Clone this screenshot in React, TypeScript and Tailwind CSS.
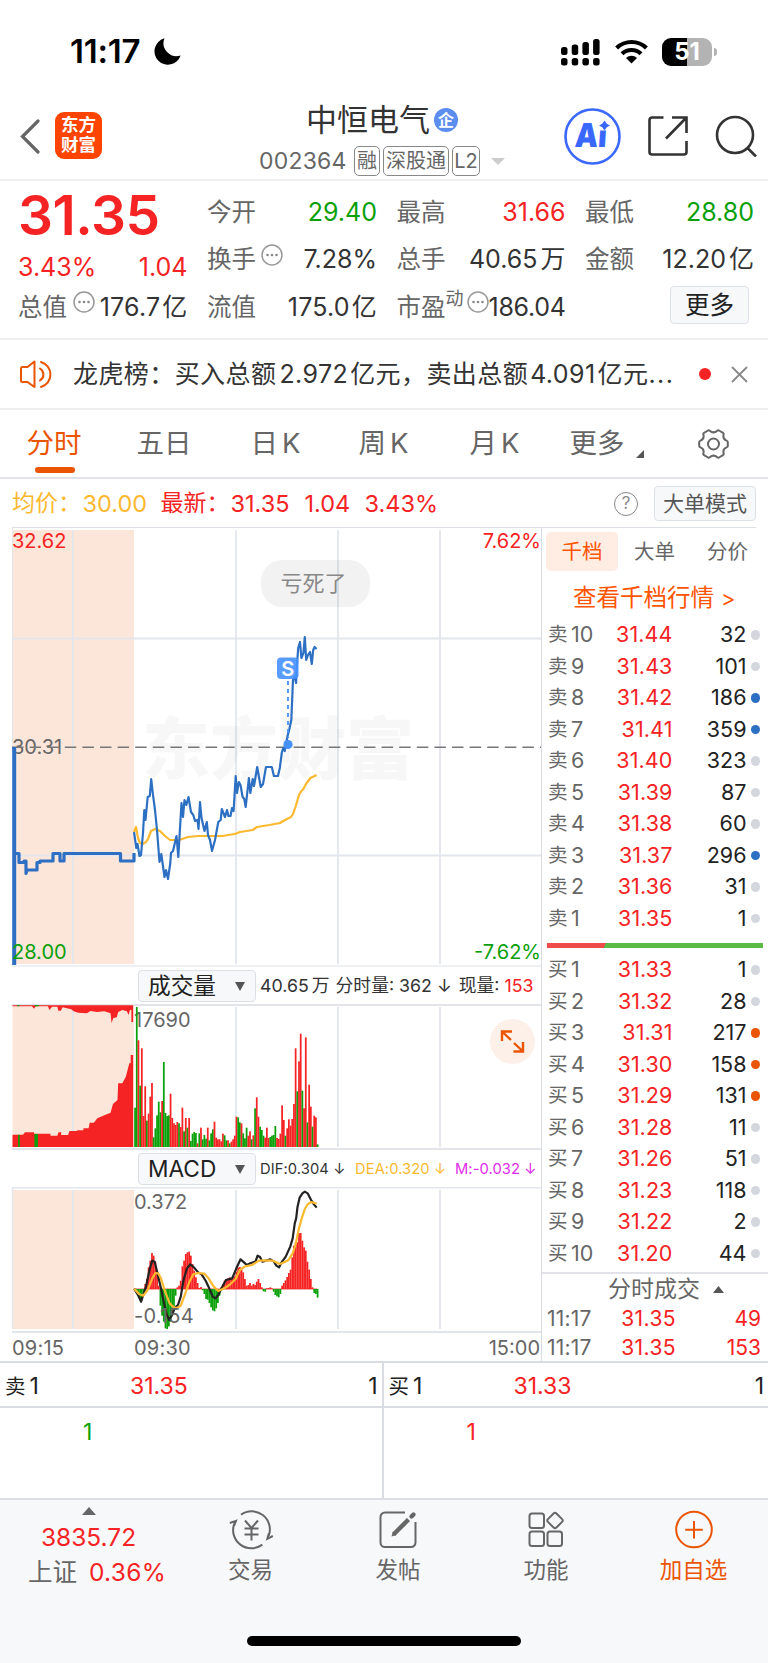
import React from "react";

type Point = [number, number];

interface DepthRow {
  label: string;
  level: number;
  price: string;
  qty: number;
  dot?: string;
}

const RED = "#f52323";
const GREEN = "#0aa00a";

const sells: DepthRow[] = [
  { label: "卖", level: 10, price: "31.44", qty: 32 },
  { label: "卖", level: 9, price: "31.43", qty: 101 },
  { label: "卖", level: 8, price: "31.42", qty: 186, dot: "bg-[#2d70c3]" },
  { label: "卖", level: 7, price: "31.41", qty: 359, dot: "bg-[#2d70c3]" },
  { label: "卖", level: 6, price: "31.40", qty: 323 },
  { label: "卖", level: 5, price: "31.39", qty: 87 },
  { label: "卖", level: 4, price: "31.38", qty: 60 },
  { label: "卖", level: 3, price: "31.37", qty: 296, dot: "bg-[#2d70c3]" },
  { label: "卖", level: 2, price: "31.36", qty: 31 },
  { label: "卖", level: 1, price: "31.35", qty: 1 },
];

const buys: DepthRow[] = [
  { label: "买", level: 1, price: "31.33", qty: 1 },
  { label: "买", level: 2, price: "31.32", qty: 28 },
  { label: "买", level: 3, price: "31.31", qty: 217, dot: "bg-[#ea5504]" },
  { label: "买", level: 4, price: "31.30", qty: 158, dot: "bg-[#ea5504]" },
  { label: "买", level: 5, price: "31.29", qty: 131, dot: "bg-[#ea5504]" },
  { label: "买", level: 6, price: "31.28", qty: 11 },
  { label: "买", level: 7, price: "31.26", qty: 51 },
  { label: "买", level: 8, price: "31.23", qty: 118 },
  { label: "买", level: 9, price: "31.22", qty: 2 },
  { label: "买", level: 10, price: "31.20", qty: 44 },
];

const priceLine =
  "134,832 136.3,848 137.5,844 139.5,856 141,855 143,833 144.3,810 145.5,820 147.7,797 149.8,796 151.2,779 153,795 155,810 157,830 159.5,862 161.3,854 164.5,877 166,870 168,879 170.3,863 171,853 173,851 176.5,836 178.3,857 181.5,803 183,817 184.5,800 186.3,805 188.5,797 191,812 193.3,815 195,821 197.5,820 198.5,829 200,802 201.5,818 204.5,831 206.8,822 208,835 210,840 212,851 215,840 218.3,822 220.7,820 221.8,809 225,817 227,810 228.4,816 230.5,816 232,808 233.6,811 235.7,776 237,793 238.8,782 240.5,785 242.6,797 244.3,799 245.7,807 248.9,778 250.3,793 252.7,779 254,786 257.2,767 260.7,787 263,784 266,767 269.4,767 271.8,767 273.9,776 278,776 279.8,768 281.9,752 283.3,748 284.7,751 285.7,745 287.8,735 289.2,730 291.3,720 293,680 294.7,677 296.1,683 296.8,667 298.2,648 300,642 301.4,658 303.4,653 304.8,637 306.2,660 308,655 310,652 311.8,664 313.2,650 314.6,647 316.6,649";

const avgLine =
  "134,832 136,827 138,838 140,843 142.5,844 146,842 148,839 151,831 155,829 160,831 165,836 170,840 179,840 188,837 198,836 208.5,836 222.5,836 234.6,834 240,832 252.7,830 257,827 269.4,825 280,823 285,820 291,817 293,814 295.5,807 299,795 300.7,792 303.4,789 306,784 310.4,778 314.6,776 316.6,775";

// minute volumes, negative = falling minute
const volumes = [
  -118, -420, 320, -184, 296, 93, 182, -79, 100, 151, 192, -29, -56, -95, -136,
  -104, 138, -255, -102, -93, -95, 160, 87, 71, 66, 75, -71, 60, 118, -47, 87,
  -58, 87, -18, -40, -45, -42, 11, -41, 58, -23, -36, -25, 58, -20, -41, -53,
  76, 28, 23, 23, 17, 40, -35, -20, 20, -11, 16, 23, 34, 91, -89, -74, 71, -41,
  -26, -58, 34, 47, -23, 35, -116, 149, 91, -61, -51, -34, 28, 58, 27, -30, -34,
  -36, -63, 27, 24, 40, 125, 81, -34, 56, 83, 64, 84, 129, 296, -167, 257, 340,
  -169, 116, 329, -74, 187, 121, -61, 94, 89, -8,
];

const macd = [
  -3, -8, -16, -30, -28, -10, 15, 30, 65, 85, 108, 100, 82, 50, 10, -50, -80,
  -98, -118, -120, -112, -98, -80, -55, -20, 5, 10, 25, 68, 85, 105, 110, 112,
  100, 75, 55, 35, 18, 3, 6, -4, -15, -30, -32, -42, -55, -64, -67, -58, -42,
  -20, 5, 15, 25, 30, 32, 35, 30, 32, 38, 52, 64, 66, 60, 50, 30, 10, 12, 18,
  10, 15, 12, 22, 30, 18, 5, -7, -8, 2, 3, 5, 2, -8, -18, -22, -25, -15, 10, 18,
  26, 36, 48, 58, 95, 130, 140, 140, 168, 168, 145, 125, 115, 82, 58, 30, 5,
  -12, -15, -26,
];

const dif: Point[] = [
  [386, 431], [398, 452], [406, 470], [412, 450], [420, 425], [430, 375],
  [438, 347], [445, 350], [452, 380], [462, 425], [472, 475], [480, 510],
  [487, 525], [495, 510], [503, 488], [512, 480], [520, 455], [528, 405],
  [538, 370], [547, 358], [558, 367], [570, 382], [580, 388], [592, 408],
  [602, 430], [612, 455], [620, 460], [628, 450], [636, 432], [650, 405],
  [668, 400], [680, 370], [692, 343], [702, 352], [710, 360], [722, 354],
  [735, 350], [741, 332], [748, 336], [755, 350], [765, 347], [778, 343],
  [788, 350], [795, 362], [803, 367], [810, 352], [822, 335], [835, 305],
  [842, 280], [848, 235], [852, 220], [856, 185], [862, 158], [870, 145],
  [877, 140], [885, 145], [895, 165], [903, 178], [911, 188],
];

const dea: Point[] = [
  [386, 431], [400, 447], [412, 452], [425, 435], [438, 400], [447, 384],
  [455, 385], [463, 400], [475, 440], [488, 475], [500, 487], [510, 489],
  [520, 482], [535, 440], [545, 410], [556, 388], [570, 384], [588, 386],
  [600, 400], [615, 425], [628, 438], [645, 430], [660, 420], [678, 402],
  [690, 375], [705, 364], [725, 360], [745, 347], [765, 346], [785, 347],
  [805, 357], [818, 352], [830, 345], [842, 325], [850, 300], [860, 250],
  [868, 220], [877, 192], [885, 178], [895, 171], [911, 176],
];

const toLine = (points: Point[]) =>
  points.map(([x, y]) => `${x * 0.3476},${1145 + y / 3}`).join(" ");

const barX = (i: number) => 134.2 + i * 1.69;

function Grid({ top, bottom }: { top: number; bottom: number }) {
  return (
    <>
      <rect x="12.5" y={top} width="121.5" height={bottom - top} fill="#fce6d9" />
      {[73, 236, 338, 440].map((x) => (
        <line key={x} x1={x} x2={x} y1={top} y2={bottom} stroke="#e3e6ed" strokeWidth="1.8" />
      ))}
    </>
  );
}

function PriceChart() {
  return (
    <svg className="block w-[541px] h-[439px]" viewBox="0 528 541 439">
      <Grid top={530} bottom={964} />
      <path d="M12 638.5H541M12 855.5H541" stroke="#e3e6ed" strokeWidth="1.8" />
      <path d="M12 966H541" stroke="#e9ebf0" strokeWidth="1.5" />
      <path d="M12.5 528V966" stroke="#e3e6ed" />
      <text x="142" y="774" fontSize="68" fontWeight="900" fill="#000" fillOpacity="0.03">
        东方财富
      </text>
      <text x="12" y="754" fontSize="20" fill="#666">30.31</text>
      <path d="M12 747.3H541" stroke="#777" strokeWidth="1.6" strokeDasharray="11.5 6.1" />
      <path d="M14.2 747V965" stroke="#2d70c3" strokeWidth="4" />
      <path
        d="M14 853.5H19V862.5H24V861H26V873.5L27 870H37V862.5H40V861H53V853.5H60V861H64V853.5H120.5V861H134V853"
        fill="none" stroke="#2d70c3" strokeWidth="3.2" strokeLinejoin="round"
      />
      <polyline points={avgLine} fill="none" stroke="#fcb92f" strokeWidth="2.2" strokeLinejoin="round" />
      <polyline points={priceLine} fill="none" stroke="#2d70c3" strokeWidth="2.2" strokeLinejoin="round" />
      <rect x="277" y="657.5" width="21.5" height="21.5" rx="4" fill="#4791ff" fillOpacity="0.9" />
      <text x="287.8" y="675.5" fontSize="20" fontWeight="600" fill="#fff" textAnchor="middle">S</text>
      <path d="M288 681V738" stroke="#4791ff" strokeWidth="1.8" strokeDasharray="4 4" />
      <circle cx="288" cy="744.5" r="4.6" fill="#4791ff" />
      <rect x="261" y="560" width="109" height="47" rx="21" fill="#000" fillOpacity="0.05" />
      <text x="280.5" y="591.3" fontSize="22" fill="#888">亏死了</text>
      <g fontSize="20">
        <text x="12" y="547.5" fill={RED}>32.62</text>
        <text x="541" y="547.5" fill={RED} textAnchor="end">7.62%</text>
        <text x="12" y="959.3" fill={GREEN}>28.00</text>
        <text x="541" y="959.3" fill={GREEN} textAnchor="end">-7.62%</text>
      </g>
    </svg>
  );
}

function VolumeChart() {
  return (
    <svg className="block w-[541px] h-[146px]" viewBox="0 1004 541 146">
      <Grid top={1007} bottom={1147} />
      <rect x="12.5" y="1005" width="121.5" height="3" fill="#fce6d9" />
      <path d="M12 1005H541M12 1149H541" stroke="#d9dce3" strokeWidth="1.6" />
      {/* call auction, matched below and unmatched above */}
      <g transform="translate(0 960) scale(0.3476 0.3333)">
        <path
          d="M36 561V524H66L72 517H98V521H145V527H165L168 517H176V525H196L200 513H222V511H240V505H255L258 488H270L280 475L300 466L318 458L325 432L338 420L340 370H352L362 350L372 310H376V285H383V561Z"
          fill={RED}
        />
        <path
          d="M36 136H383V186H378V150H374L370 165L365 154L352 150L340 156L336 172L326 174L321 190L318 160L300 154L280 156L260 153L250 160L225 158L212 154L205 148L180 142L175 152H168L165 140H150L142 150L138 139H103L98 146L92 139H36Z"
          fill={RED}
        />
        <path d="M52 524H57V561H52ZM99 522H109V561H99ZM50 135H56V139H50ZM100 135H112V139H100Z" fill={GREEN} />
      </g>
      <text x="134" y="1026.5" fontSize="20" fill="#666">17690</text>
      {volumes.map((v, i) => (
        <rect
          key={i}
          x={barX(i)}
          y={1147 - Math.abs(v) / 3}
          width="1.75"
          height={Math.abs(v) / 3}
          fill={v > 0 ? RED : GREEN}
        />
      ))}
      <circle cx="512.5" cy="1041.5" r="22.5" fill="#fdf0e9" />
      <path
        d="M502 1041V1031.5H512M502 1031.5L511 1040M523 1042V1051.5H513.5M523 1051.5L514 1043"
        fill="none" stroke="#ea5504" strokeWidth="2.4"
      />
    </svg>
  );
}

function MacdChart() {
  return (
    <svg className="block w-[541px] h-[146px]" viewBox="0 1187 541 146">
      <Grid top={1190} bottom={1329} />
      <path d="M12 1187.8H541M12.5 1188V1329" stroke="#e3e6ed" strokeWidth="1.4" />
      <path d="M12 1332H541" stroke="#d9dce3" strokeWidth="1.6" />
      <path d="M134 1289H317" stroke={RED} strokeWidth="0.8" />
      {macd.map((v, i) => (
        <rect
          key={i}
          x={barX(i)}
          y={v > 0 ? 1289 - v / 3 : 1289}
          width="1.75"
          height={Math.abs(v) / 3}
          fill={v > 0 ? RED : GREEN}
        />
      ))}
      <polyline points={toLine(dif)} fill="none" stroke="#222" strokeWidth="2.2" strokeLinejoin="round" />
      <polyline points={toLine(dea)} fill="none" stroke="#fcb92f" strokeWidth="2.2" strokeLinejoin="round" />
      <text x="134" y="1209.3" fontSize="20" fill="#666">0.372</text>
      <text x="134" y="1323.3" fontSize="20" fill="#666" letterSpacing="0.2">-0.154</text>
    </svg>
  );
}

function MoreDots({ className = "" }: { className?: string }) {
  return (
    <svg className={`w-[22px] h-[22px] shrink-0 ${className}`} viewBox="0 0 22 22">
      <circle cx="11" cy="11" r="10" fill="none" stroke="#999" strokeWidth="1.5" />
      <g fill="#888">
        <circle cx="6.5" cy="11" r="1.3" />
        <circle cx="11" cy="11" r="1.3" />
        <circle cx="15.5" cy="11" r="1.3" />
      </g>
    </svg>
  );
}

function IndicatorSelect({ name }: { name: string }) {
  return (
    <div className="ml-[138px] w-[118px] h-[32px] shrink-0 flex items-center justify-between pl-[9px] pr-[10px] rounded border border-[#dcdfe6] bg-[#f7f8fa] text-[#222]">
      <span className="text-[22.7px]">{name}</span>
      <svg className="w-[10px] h-[9px]" viewBox="0 0 9 8">
        <path d="M0 0H9L4.5 8Z" fill="#555" />
      </svg>
    </div>
  );
}

function DepthList({ rows }: { rows: DepthRow[] }) {
  return (
    <>
      {rows.map((row) => (
        <div key={row.label + row.level} className="flex items-center h-[31.5px] pl-[6px] pr-[8px] text-[21.5px]">
          <span className="w-[23px] text-[19.5px] text-[#666]">{row.label}</span>
          <span className="w-[30px] text-[#666]">{row.level}</span>
          <span className="w-[71.5px] text-right text-[#f52323] tracking-[0.1px]">{row.price}</span>
          <span className="flex-1 text-right text-[#222] mr-[4px]">{row.qty}</span>
          <span className={`w-[9.5px] h-[9.5px] shrink-0 rounded-full ${row.dot || "bg-[#d3d6dd]"}`} />
        </div>
      ))}
    </>
  );
}

function StatusBar() {
  return (
    <div className="flex items-center h-[103px] pl-[70px] pr-[56px]">
      <span className="w-[84px] text-[33px] font-semibold tracking-[-0.2px] text-black">11:17</span>
      <svg className="w-[27px] h-[27px]" viewBox="0 0 27 27">
        <path d="M10.5 0.3A13.4 13.4 0 1 0 26.6 17.5A13 13 0 0 1 10.5 0.3Z" />
      </svg>
      <svg className="ml-auto w-[39px] h-[28px]" viewBox="0 0 39 28">
        {[8, 10.5, 13, 16].map((h, i) => (
          <g key={i}>
            <rect x={i * 10.7} y={17 - h} width="6.5" height={h} rx="2.5" />
            <rect x={i * 10.7} y="20" width="6.5" height="7.5" rx="2.5" />
          </g>
        ))}
      </svg>
      <svg className="ml-[15px] w-[33px] h-[25px]" viewBox="0 0 33 25">
        <g fill="none" stroke="#000" strokeWidth="4.2">
          <path d="M1.6 9A21.5 21.5 0 0 1 31.4 9" />
          <path d="M7 14.8A13.8 13.8 0 0 1 26 14.8" />
        </g>
        <path d="M16.5 24.5L11 19A8 8 0 0 1 22 19Z" />
      </svg>
      <div className="relative ml-[14px] w-[50px] h-[28px] rounded-[9px] flex items-center justify-center bg-[linear-gradient(90deg,#000_50%,#b3b3b3_50%)]">
        <span className="text-[24px] font-bold text-white">51</span>
        <span className="absolute -right-[5px] top-[10px] w-[3px] h-[8px] rounded-r-full bg-[#b3b3b3]" />
      </div>
    </div>
  );
}

function Header() {
  return (
    <div className="h-[78px] border-b-2 border-[#eeeff1]">
      <div className="flex items-center h-[66px] pl-[20px]">
        <svg className="w-[20px] h-[35px]" viewBox="0 0 20 35">
          <path d="M18 2L2.5 17.5L18 33" fill="none" stroke="#666" strokeWidth="3.2" strokeLinecap="round" />
        </svg>
        <div className="ml-[15px] -mt-[2px] w-[47px] h-[47px] rounded-[9px] bg-[#ff4400] text-white text-[17.5px] leading-[20px] font-bold flex flex-col items-center justify-center">
          <span>东方</span>
          <span>财富</span>
        </div>
        <div className="ml-[157px] w-[246px] mt-[8px]">
          <div className="flex items-center h-[34px] pl-[47px] text-[31px] text-[#333]">
            <span className="-mt-[4px]">中恒电气</span>
            <span className="ml-[4px] -mt-[2px] w-[24px] h-[24px] rounded-full bg-[#5b8def] text-white text-[16px] font-bold flex items-center justify-center">
              企
            </span>
          </div>
          <div className="flex items-center mt-[8px] h-[30px] text-[23px] text-[#666]">
            <span className="w-[95px] tracking-[0.2px]">002364</span>
            <span className="w-[26px] h-[30px] border-[1.5px] border-[#888] rounded-[5px] text-[20px] flex items-center justify-center">融</span>
            <span className="ml-[3px] w-[66px] h-[30px] border-[1.5px] border-[#888] rounded-[5px] text-[20px] flex items-center justify-center">深股通</span>
            <span className="ml-[3px] w-[28px] h-[30px] border-[1.5px] border-[#888] rounded-[5px] text-[20px] flex items-center justify-center">L2</span>
            <svg className="ml-auto w-[14px] h-[7px]" viewBox="0 0 14 7">
              <path d="M0 0H14L7 7Z" fill="#ccc" />
            </svg>
          </div>
        </div>
        <svg className="ml-[59px] w-[57px] h-[57px]" viewBox="0 0 57 57">
          <circle cx="28.5" cy="28.5" r="27" fill="none" stroke="#3a68ff" strokeWidth="2.6" />
          <g transform="skewX(-4)">
            <text x="13" y="39.5" fontSize="33" fontWeight="900" fill="#3a68ff" textLength="32" lengthAdjust="spacingAndGlyphs">Ai</text>
          </g>
          <path d="M34 11H48V22.5H34Z" fill="#fff" />
          <path d="M40.5 12.5L42.8 15.7L46 17.5L42.8 19.3L40.5 22.5L38.2 19.3L35 17.5L38.2 15.7Z" fill="#3a68ff" />
        </svg>
        <svg className="ml-[27px] w-[40px] h-[40px]" viewBox="0 0 40 40" fill="none" stroke="#333" strokeWidth="2.6">
          <path d="M15.5 1.5H4A2.5 2.5 0 0 0 1.5 4V36A2.5 2.5 0 0 0 4 38.5H36A2.5 2.5 0 0 0 38.5 36V25" />
          <path d="M24 1.5H38.5V17M38 2L18 22.5" />
        </svg>
        <svg className="ml-[27px] w-[42px] h-[42px]" viewBox="0 0 42 42" fill="none" stroke="#333" strokeWidth="2.6">
          <circle cx="20" cy="20" r="18" />
          <path d="M32.5 33L41 41.5" />
        </svg>
      </div>
    </div>
  );
}

function Quote() {
  return (
    <div className="grid grid-cols-[169.5px_170px_169px_169px] gap-x-[19.5px] pl-[18px] pr-[13px] h-[159px] border-b-2 border-[#eeeff1] text-[25px] text-[#333] whitespace-nowrap">
      <div>
        <div className="h-[68px] flex items-center text-[55px] tracking-[-0.5px] font-semibold text-[#f52323]">31.35</div>
        <div className="h-[36px] flex items-center justify-between text-[#f52323]">
          <span>3.43%</span>
          <span>1.04</span>
        </div>
        <div className="h-[44px] flex items-center">
          <span className="text-[24.5px] text-[#666]">总值</span>
          <MoreDots className="ml-[6px] mb-[10px]" />
          <span className="ml-auto tracking-[0.2px]">176.7<span className="ml-[2px]">亿</span></span>
        </div>
      </div>
      <div>
        <div className="h-[62px] flex items-center justify-between">
          <span className="text-[24.5px] text-[#666]">今开</span>
          <span className="text-[#0aa00a]">29.40</span>
        </div>
        <div className="h-[33px] flex items-center">
          <span className="text-[24.5px] text-[#666]">换手</span>
          <MoreDots className="ml-[5px] mb-[10px]" />
          <span className="ml-auto">7.28%</span>
        </div>
        <div className="h-[62px] flex items-center justify-between">
          <span className="text-[24.5px] text-[#666]">流值</span>
          <span className="tracking-[0.2px]">175.0<span className="ml-[2px]">亿</span></span>
        </div>
      </div>
      <div>
        <div className="h-[62px] flex items-center justify-between">
          <span className="text-[24.5px] text-[#666]">最高</span>
          <span className="text-[#f52323]">31.66</span>
        </div>
        <div className="h-[33px] flex items-center justify-between">
          <span className="text-[24.5px] text-[#666]">总手</span>
          <span>40.65<span className="ml-[3px]">万</span></span>
        </div>
        <div className="h-[62px] flex items-center">
          <span className="text-[24.5px] text-[#666]">市盈</span>
          <span className="text-[18px] text-[#666] mb-[16px]">动</span>
          <MoreDots className="ml-[3px] mb-[10px]" />
          <span className="ml-auto tracking-[-0.3px]">186.04</span>
        </div>
      </div>
      <div>
        <div className="h-[62px] flex items-center justify-between">
          <span className="text-[24.5px] text-[#666]">最低</span>
          <span className="text-[#0aa00a]">28.80</span>
        </div>
        <div className="h-[33px] flex items-center justify-between">
          <span className="text-[24.5px] text-[#666]">金额</span>
          <span>12.20<span className="ml-[3px]">亿</span></span>
        </div>
        <div className="h-[58px] flex items-center justify-end pr-[5px]">
          <span className="w-[79px] h-[38px] rounded border-[1.5px] border-[#dfe1e8] bg-[#f7f8fa] flex items-center justify-center text-[24.5px] text-[#222]">
            更多
          </span>
        </div>
      </div>
    </div>
  );
}

function News() {
  return (
    <div className="flex items-center h-[70px] border-b-2 border-[#eeeff1] pl-[20px] pr-[20px] text-[25px] text-[#333]">
      <svg className="w-[33px] h-[29px]" viewBox="0 0 33 29" fill="none" stroke="#ea5504" strokeWidth="2" strokeLinejoin="round" strokeLinecap="round">
        <path d="M1 8.5Q1 7 2.5 7H7.5L14.5 1.5V27L7.5 22H2.5Q1 22 1 20.5Z" />
        <path d="M20 8.5A7 7 0 0 1 20 20.5M21 2A13 13 0 0 1 21 27" />
      </svg>
      <span className="ml-[20px] w-[607px] whitespace-nowrap tracking-[0.42px]">
        龙虎榜：买入总额<span className="ml-[3px]">2.972</span><span className="ml-[2px]">亿元，卖出总额</span>
        <span className="ml-[2px]">4.091</span><span className="ml-[2px]">亿元</span><span className="tracking-[1.5px]">...</span>
      </span>
      <span className="ml-[19px] w-[12px] h-[12px] rounded-full bg-[#f52323]" />
      <svg className="ml-auto w-[17px] h-[17px]" viewBox="0 0 17 17">
        <path d="M1 1L16 16M16 1L1 16" stroke="#888" strokeWidth="1.8" />
      </svg>
    </div>
  );
}

function Tabs() {
  return (
    <div className="flex items-center h-[69px] border-b-2 border-[#e1e3e8] pl-[26.5px] text-[27.5px] text-[#666] whitespace-nowrap">
      <div className="relative w-[110px] text-[#ea5504]">
        分时
        <span className="absolute left-[8.5px] top-[37px] w-[40px] h-[6px] rounded-full bg-[#ea5504]" />
      </div>
      <span className="w-[114px]">五日</span>
      <span className="w-[108px]">日<span className="ml-[4px]">K</span></span>
      <span className="w-[111px]">周<span className="ml-[4px]">K</span></span>
      <span className="w-[100px]">月<span className="ml-[4px]">K</span></span>
      <span>更多</span>
      <svg className="ml-[11px] mt-[20px] w-[8px] h-[8px]" viewBox="0 0 8 8">
        <path d="M8 0V8H0Z" fill="#555" />
      </svg>
      <svg className="ml-[54px] w-[31px] h-[30px]" viewBox="0 0 31 30" fill="none" stroke="#666" strokeWidth="2" strokeLinejoin="round">
        <path d="M10 1.5Q11 1 11.8 1.8Q15.5 5 19.2 1.8Q20 1 21 1.5L25 3.8Q26 4.5 25.6 5.6Q24.5 10 28.5 11.6Q29.8 12 29.8 13V17Q29.8 18 28.5 18.4Q24.5 20 25.6 24.4Q26 25.5 25 26.2L21 28.5Q20 29 19.2 28.2Q15.5 25 11.8 28.2Q11 29 10 28.5L6 26.2Q5 25.5 5.4 24.4Q6.5 20 2.5 18.4Q1.2 18 1.2 17V13Q1.2 12 2.5 11.6Q6.5 10 5.4 5.6Q5 4.5 6 3.8Z" />
        <circle cx="15.5" cy="15" r="5.5" />
      </svg>
    </div>
  );
}

function Depth() {
  return (
    <div className="flex-1 pt-[4px]">
      <div className="flex items-center pl-[4px] h-[39px] text-[20.5px] text-[#666]">
        <span className="w-[72px] h-[39px] pt-[2px] rounded-[5px] bg-[#ffece3] text-[#ff5500] flex items-center justify-center">千档</span>
        <span className="w-[73px] pt-[2px] text-center">大单</span>
        <span className="w-[73px] pt-[2px] text-center">分价</span>
      </div>
      <div className="h-[48px] pt-[6px] pl-[31px] flex items-center text-[23.5px] text-[#ff5500]">
        查看千档行情<span className="ml-[7px] text-[22px]">&gt;</span>
      </div>
      <DepthList rows={sells} />
      <div className="ml-[5px] mt-[9px] mb-[6px] w-[215.5px] h-[5px] bg-[linear-gradient(120deg,#ee4b4b_27%,#5cba47_27%)]" />
      <DepthList rows={buys} />
      <div className="mt-[3px] h-[32px] border-t-2 border-[#e1e3e8] flex items-center pl-[66px] text-[23px] text-[#666]">
        分时成交
        <svg className="ml-[13px] w-[11px] h-[7px]" viewBox="0 0 11 7">
          <path d="M0 7H11L5.5 0Z" fill="#555" />
        </svg>
      </div>
      {["49", "153"].map((qty) => (
        <div key={qty} className="flex items-center h-[29px] pl-[5px] pr-[7px] text-[21px] text-[#f52323]">
          <span className="w-[60px] text-[#666] tracking-[0.2px]">11:17</span>
          <span className="w-[69px] text-right tracking-[0.4px]">31.35</span>
          <span className="flex-1 text-right">{qty}</span>
        </div>
      ))}
    </div>
  );
}

function Queue({ label, price, count, color }: { label: string; price: string; count: string; color: string }) {
  return (
    <div className="w-[383.5px] border-r-2 border-[#d9dce3] last:border-r-0 last:flex-1">
      <div className="flex items-center h-[45px] pt-[4px] border-b-2 border-[#d9dce3] pl-[5px] pr-[4px] text-[23px] text-[#222]">
        <span className="w-[125px]"><span className="text-[20.5px] mr-[4px]">{label}</span>1</span>
        <span className="text-[#f52323]">{price}</span>
        <span className="ml-auto">1</span>
      </div>
      <div className={`pl-[83px] pt-[11px] leading-[26px] text-[23px] ${color}`}>{count}</div>
    </div>
  );
}

function Footer() {
  return (
    <div className="relative flex h-[165px] border-t-2 border-[#dcdfe6] bg-[#f7f8fa] text-[22.5px] text-[#666]">
      <div className="w-[177px] flex flex-col items-center text-[24.5px]">
        <svg className="mt-[7px] w-[14px] h-[8px]" viewBox="0 0 14 8">
          <path d="M0 8H14L7 0Z" fill="#666" />
        </svg>
        <span className="h-[44px] flex items-center text-[#f52323]">3835.72</span>
        <span className="ml-[17px] h-[26px] flex items-center">
          上证<span className="ml-[12px] text-[#f52323] tracking-[0.3px]">0.36%</span>
        </span>
      </div>
      <div className="w-[147px] flex flex-col items-center pt-[10px]">
        <svg className="w-[46px] h-[40px]" viewBox="0 0 46 40" fill="none" stroke="#666" strokeWidth="2">
          <path d="M13 4.8A18.2 18.2 0 0 1 40.7 26M34.3 34.6A18.2 18.2 0 0 1 6.3 13.6" />
          <path d="M1.8 13L8 10.8L6 16M44.8 26L39.3 28.8L41 23" />
          <path d="M17 10.5L23.5 18L30 10.5M16.5 18.5H30.5M16.5 24.5H30.5M23.5 18V30.5" />
        </svg>
        <span className="mt-[9px]">交易</span>
      </div>
      <div className="w-[148px] flex flex-col items-center pt-[10px]">
        <svg className="w-[38px] h-[40px]" viewBox="0 0 38 40" fill="none" stroke="#666" strokeWidth="2">
          <path d="M26 2.5H6A4.5 4.5 0 0 0 1.5 7V32.5A4.5 4.5 0 0 0 6 37H32A4.5 4.5 0 0 0 36.5 32.5V12" />
          <path d="M14.5 24.5L29.5 9.5" strokeWidth="4.4" />
          <path d="M32.5 6.5L34.5 4.5" strokeWidth="4.4" strokeLinecap="round" />
          <path d="M12.5 26.5L14 21.5L17.5 25Z" fill="#666" stroke="none" />
        </svg>
        <span className="mt-[9px]">发帖</span>
      </div>
      <div className="w-[148px] flex flex-col items-center pt-[10px]">
        <svg className="w-[36px] h-[40px]" viewBox="0 0 36 40" fill="none" stroke="#666" strokeWidth="2">
          <rect x="1.5" y="3.5" width="14.5" height="14.5" rx="2.5" />
          <rect x="1.5" y="21.5" width="14.5" height="14.5" rx="2.5" />
          <rect x="19.5" y="21.5" width="14.5" height="14.5" rx="2.5" />
          <rect x="21" y="4.5" width="12" height="12" rx="2" transform="rotate(45 27 10.5)" />
        </svg>
        <span className="mt-[9px]">功能</span>
      </div>
      <div className="w-[147px] flex flex-col items-center pt-[10px] text-[#ea5504]">
        <svg className="w-[40px] h-[40px]" viewBox="0 0 40 40" fill="none" stroke="#ea5504" strokeWidth="2">
          <circle cx="20" cy="19.5" r="17.8" />
          <path d="M20 11V28.5M11.2 19.8H28.8" />
        </svg>
        <span className="mt-[9px]">加自选</span>
      </div>
      <span className="absolute left-[247px] top-[136px] w-[274px] h-[10px] rounded-full bg-black" />
    </div>
  );
}

function App() {
  return (
    <div className="w-[768px] h-[1663px] overflow-hidden bg-white leading-none font-['Inter','Noto_Sans_CJK_SC',sans-serif]">
      <StatusBar />
      <Header />
      <Quote />
      <News />
      <Tabs />
      <div className="mx-[12px] flex items-center h-[49px] pt-px border-b border-[#dcdfe6] text-[23.5px] whitespace-nowrap">
        <span className="w-[70.5px] text-[23px] text-[#fcb92f]">均价：</span>
        <span className="w-[78px] text-[#fcb92f]">30.00</span>
        <span className="w-[70px] text-[23px] text-[#f52323]">最新：</span>
        <span className="w-[74px] text-[#f52323]">31.35</span>
        <span className="w-[60px] text-[#f52323]">1.04</span>
        <span className="text-[#f52323]">3.43%</span>
        <span className="ml-auto w-[24px] h-[24px] rounded-full border-[1.5px] border-[#888] text-[17px] text-[#888] flex items-center justify-center">?</span>
        <span className="ml-[16px] w-[102px] h-[35px] rounded border-[1.5px] border-[#dfe1e8] bg-[#f7f8fa] text-[21px] text-[#555] flex items-center justify-center">
          大单模式
        </span>
      </div>
      <div className="flex h-[833px]">
        <div className="w-[542px] border-r border-[#d9dce3]">
          <PriceChart />
          <div className="flex items-center h-[37px] pt-px text-[17.8px] text-[#333] whitespace-nowrap">
            <IndicatorSelect name="成交量" />
            <span className="ml-[4px]">40.65<span className="ml-[3px]">万</span></span>
            <span className="ml-[6px]">分时量: 362 ↓</span>
            <span className="ml-[7px]">现量: <span className="text-[#f52323]">153</span></span>
          </div>
          <VolumeChart />
          <div className="flex items-center h-[37px] pt-px text-[14.7px] text-[#333] whitespace-nowrap">
            <IndicatorSelect name="MACD" />
            <span className="ml-[4px] w-[95px] tracking-[0.1px]">DIF:0.304 ↓</span>
            <span className="w-[100px] tracking-[0.1px] text-[#fcb92f]">DEA:0.320 ↓</span>
            <span className="tracking-[0.1px] text-[#e02be8]">M:-0.032 ↓</span>
          </div>
          <MacdChart />
          <div className="flex items-center h-[28px] pt-[2px] pl-[12px] pr-px text-[20px] text-[#666]">
            <span className="w-[122px] tracking-[0.2px]">09:15</span>
            <span className="tracking-[0.2px]">09:30</span>
            <span className="ml-auto">15:00</span>
          </div>
        </div>
        <Depth />
      </div>
      <div className="flex h-[137px] border-t-2 border-[#d9dce3]">
        <Queue label="卖" price="31.35" count="1" color="text-[#0aa00a]" />
        <Queue label="买" price="31.33" count="1" color="text-[#f52323]" />
      </div>
      <Footer />
    </div>
  );
}

export default App;
